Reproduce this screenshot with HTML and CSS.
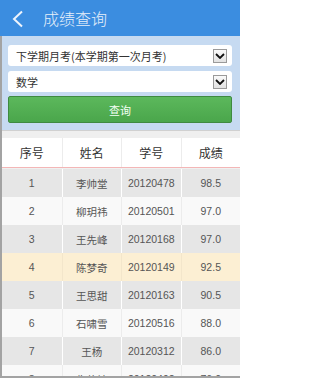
FILE: index.html
```html
<!DOCTYPE html>
<html lang="zh">
<head>
<meta charset="utf-8">
<meta name="viewport" content="width=240">
<title>成绩查询</title>
<link rel="stylesheet" href="styles.css">
</head>
<body>
<div class="page">
<header class="topbar">
  <svg class="back" width="14" height="18" viewBox="0 0 14 18"><polyline points="11,1.5 3,9 11,16.5" fill="none" stroke="#eef4fc" stroke-width="2"/></svg>
  <h1 class="title">成绩查询</h1>
</header>
<main class="main">
  <section class="panel">
    <div class="select"><span>下学期月考(本学期第一次月考)</span><span class="arrow"><svg width="10" height="6" viewBox="0 0 10 6"><polyline points="1,1 5,5 9,1" fill="none" stroke="#111" stroke-width="1.8"/></svg></span></div>
    <div class="select"><span>数学</span><span class="arrow"><svg width="10" height="6" viewBox="0 0 10 6"><polyline points="1,1 5,5 9,1" fill="none" stroke="#111" stroke-width="1.8"/></svg></span></div>
    <button class="btn">查询</button>
  </section>
  <div class="strip"></div>
  <div class="table">
    <div class="row head"><div>序号</div><div>姓名</div><div>学号</div><div>成绩</div></div>
    <div class="row odd"><div>1</div><div>李帅堂</div><div>20120478</div><div>98.5</div></div>
    <div class="row even"><div>2</div><div>柳玥祎</div><div>20120501</div><div>97.0</div></div>
    <div class="row odd"><div>3</div><div>王先峰</div><div>20120168</div><div>97.0</div></div>
    <div class="row hl"><div>4</div><div>陈梦奇</div><div>20120149</div><div>92.5</div></div>
    <div class="row odd"><div>5</div><div>王思甜</div><div>20120163</div><div>90.5</div></div>
    <div class="row even"><div>6</div><div>石啸雪</div><div>20120516</div><div>88.0</div></div>
    <div class="row odd"><div>7</div><div>王杨</div><div>20120312</div><div>86.0</div></div>
    <div class="row even"><div>8</div><div>佟佳楠</div><div>20120492</div><div>76.0</div></div>
  </div>
</main>
<div class="frame-bottom"></div>
</div>
</body>
</html>
```
FILE: styles.css
```css
html, body { margin: 0; padding: 0; }
body {
  font-family: "Liberation Sans", "Noto Sans CJK SC", sans-serif;
  background: #ffffff;
  overflow: hidden;
}
.page {
  width: 240px;
  height: 378px;
  overflow: hidden;
  position: relative;
  background: #f0f0f0;
}
.topbar {
  height: 36px;
  background: #3b8de0;
  display: flex;
  align-items: center;
  padding-left: 11px;
  box-sizing: border-box;
}
.back { display: block; margin-top: 1px; }
.title {
  margin: 0 0 0 18px;
  font-family: "Noto Sans CJK SC", sans-serif;
  font-size: 16px;
  font-weight: 300;
  color: #e6effa;
}
.main {
  border-left: 2px solid #a3a3a3;
}
.panel {
  background: #c6daf1;
  padding: 9px 8px 7px 6px;
  display: flex;
  flex-direction: column;
}
.select {
  height: 21px;
  background: #fff;
  border-radius: 3px;
  display: flex;
  align-items: center;
  justify-content: space-between;
  padding: 0 5px 0 8px;
  font-family: "Noto Sans CJK SC", sans-serif;
  font-size: 11px;
  color: #333;
  margin-bottom: 5px;
}
.select + .select { margin-bottom: 4px; }
.arrow {
  width: 12px;
  height: 12px;
  border: 1px solid #9a9a9a;
  background: linear-gradient(#fafafa, #e2e2e2);
  display: flex;
  align-items: center;
  justify-content: center;
}
.arrow svg { display: block; }
.btn {
  height: 27px;
  border: 1px solid #3f8a40;
  border-radius: 2px;
  background: linear-gradient(#5cb85c, #4aa64b);
  color: #f4fff4;
  font-family: "Noto Sans CJK SC", sans-serif;
  font-size: 11px;
  padding: 0;
}
.strip {
  height: 7px;
  border-top: 1px solid #d0d0d0;
  background: #efefef;
}
.table { display: flex; flex-direction: column; }
.row {
  display: grid;
  grid-template-columns: 1fr 1fr 1fr 1fr;
  height: 28px;
}
.row > div {
  display: flex;
  align-items: center;
  justify-content: center;
  font-family: "Liberation Sans", "Noto Sans CJK SC", sans-serif;
  font-size: 10.5px;
  color: #555;
  border-left: 1px solid #ffffff;
}
.row > div:first-child { border-left: none; }
.row.head {
  height: 29px;
  background: #fff;
  border-bottom: 1px solid #f3b6b6;
  margin-bottom: 1px;
}
.row.head > div {
  font-family: "Noto Sans CJK SC", sans-serif;
  font-size: 12px;
  color: #333;
  border-left: 1px solid #ececec;
}
.row.head > div:first-child { border-left: none; }
.row.odd { background: #e6e6e6; }
.row.even { background: #f9f9f9; }
.row.even > div { border-left-color: #ececec; }
.row.even > div:first-child { border-left: none; }
.row.hl { background: #fcefd3; }
.row.hl > div { border-left-color: #f3e6cb; }
.row.hl > div:first-child { border-left: none; }
.frame-bottom {
  position: absolute;
  left: 0;
  right: 0;
  bottom: 0;
  height: 2px;
  background: #a3a3a3;
}
```
